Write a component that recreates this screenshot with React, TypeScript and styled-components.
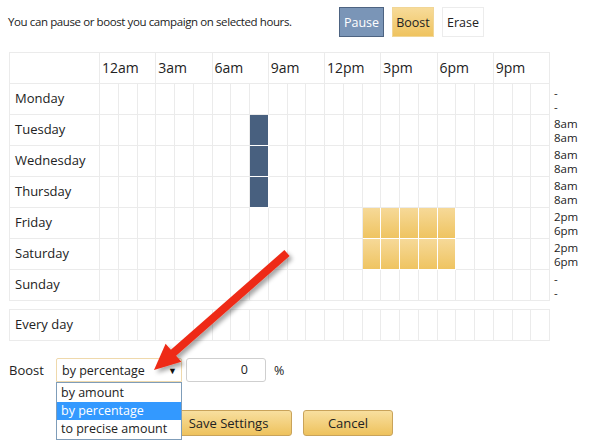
import React from "react";
import styled, { createGlobalStyle, css } from "styled-components";

const Global = createGlobalStyle`
  html, body { margin: 0; padding: 0; background: #fff; }
  body { font-family: "Open Sans", "Noto Sans", sans-serif; color: #222; }
  * { box-sizing: border-box; }
`;

const Page = styled.div`
  position: relative;
  width: 593px;
  height: 448px;
  padding: 7px 0 0 9px;
  overflow: hidden;
`;

const TopBar = styled.div`
  display: flex;
  align-items: flex-start;
  height: 45px;
`;

const Intro = styled.div`
  font-size: 11.5px;
  letter-spacing: -0.4px;
  line-height: 16px;
  margin: 7px 0 0 -1px;
  width: 331px;
`;

const ModeButtons = styled.div`
  display: flex;
  gap: 8px;
`;

const ModeButton = styled.div<{ $variant: "pause" | "boost" | "erase"; $w: number }>`
  width: ${(p) => p.$w}px;
  height: 30px;
  display: flex;
  align-items: center;
  justify-content: center;
  font-size: 12.5px;
  border: 1px solid;
  ${(p) =>
    p.$variant === "pause"
      ? css`
          background: #7a95b7;
          border-color: #4d6381;
          color: #fff;
        `
      : p.$variant === "boost"
      ? css`
          background: linear-gradient(#f7db99, #efc35f);
          border-color: #f1d696;
          color: #222;
        `
      : css`
          background: #fff;
          border-color: #ececec;
          color: #222;
        `}
`;

const cols = "91px repeat(24, 18.75px) 44px";

const Schedule = styled.div`
  display: grid;
  grid-template-columns: ${cols};
  grid-template-rows: 32px repeat(7, 31px);
`;

const EveryDay = styled.div`
  display: grid;
  grid-template-columns: ${cols};
  grid-template-rows: 32px;
  margin-top: 8px;
`;

const line = "#ebebeb";

const Blank = styled.div`
  border: 1px solid ${line};
`;

const HourHead = styled.div`
  grid-column: span 3;
  border-top: 1px solid ${line};
  border-right: 1px solid ${line};
  border-bottom: 1px solid ${line};
  font-size: 14px;
  color: #222;
  padding: 6px 0 0 2px;
  line-height: 18px;
`;

const DayLabel = styled.div<{ $top?: boolean }>`
  border-left: 1px solid ${line};
  border-right: 1px solid ${line};
  border-bottom: 1px solid ${line};
  ${(p) => p.$top && css`border-top: 1px solid ${line};`}
  font-size: 13px;
  color: #222;
  display: flex;
  align-items: center;
  padding: 0 0 2px 5px;
`;

const HourCell = styled.div<{ $fill?: "pause" | "boost"; $top?: boolean }>`
  border-right: 1px solid ${line};
  border-bottom: 1px solid ${line};
  ${(p) => p.$top && css`border-top: 1px solid ${line};`}
  ${(p) =>
    p.$fill === "pause" &&
    css`
      background: #48607f;
      border-color: #fff;
    `}
  ${(p) =>
    p.$fill === "boost" &&
    css`
      background: linear-gradient(#f6d998, #efc461);
      border-color: #fff;
    `}
`;

const Note = styled.div`
  font-size: 11.5px;
  line-height: 14px;
  padding-left: 4px;
  display: flex;
  flex-direction: column;
  justify-content: center;
  color: #222;
`;

const BoostRow = styled.div`
  display: flex;
  align-items: center;
  margin-top: 17px;
  height: 24px;
`;

const FieldLabel = styled.div`
  width: 47px;
  font-size: 13px;
`;

const SelectBox = styled.div`
  position: relative;
  width: 126px;
  height: 24px;
  border: 1px solid #efd9ac;
  border-radius: 2px 2px 0 0;
  font-size: 12.5px;
  display: flex;
  align-items: center;
  padding-left: 5px;
`;

const Caret = styled.span`
  position: absolute;
  right: 4px;
  top: 5px;
  font-size: 9px;
  color: #111;
`;

const Dropdown = styled.div`
  position: absolute;
  left: -1px;
  top: 23px;
  width: 126px;
  border: 1px solid #7f9db9;
  background: #fff;
  padding: 1px 0;
  z-index: 2;
`;

const Option = styled.div<{ $active?: boolean }>`
  height: 18px;
  line-height: 18px;
  padding-left: 4px;
  font-size: 12.5px;
  ${(p) =>
    p.$active &&
    css`
      background: #3399ff;
      color: #fff;
    `}
`;

const NumberInput = styled.div`
  width: 80px;
  height: 24px;
  margin-left: 4px;
  border: 1px solid #cfcfcf;
  border-radius: 3px;
  font-size: 12.5px;
  text-align: right;
  padding-right: 17px;
  line-height: 22px;
`;

const Unit = styled.div`
  margin-left: 8px;
  font-size: 12.5px;
`;

const Actions = styled.div`
  display: flex;
  gap: 11px;
  margin: 28px 0 0 156px;
`;

const ActionButton = styled.div<{ $w: number }>`
  width: ${(p) => p.$w}px;
  height: 26px;
  border: 1px solid #c9a35a;
  border-radius: 3px;
  background: linear-gradient(#f8df9f, #eec25d);
  font-size: 13px;
  display: flex;
  align-items: center;
  justify-content: center;
  color: #222;
`;

const ArrowSvg = styled.svg`
  position: absolute;
  left: 0;
  top: 0;
  pointer-events: none;
  z-index: 3;
`;

const hours = ["12am", "3am", "6am", "9am", "12pm", "3pm", "6pm", "9pm"];

type Day = { name: string; notes: [string, string]; fill?: { kind: "pause" | "boost"; from: number; to: number } };

const days: Day[] = [
  { name: "Monday", notes: ["-", "-"] },
  { name: "Tuesday", notes: ["8am", "8am"], fill: { kind: "pause", from: 8, to: 8 } },
  { name: "Wednesday", notes: ["8am", "8am"], fill: { kind: "pause", from: 8, to: 8 } },
  { name: "Thursday", notes: ["8am", "8am"], fill: { kind: "pause", from: 8, to: 8 } },
  { name: "Friday", notes: ["2pm", "6pm"], fill: { kind: "boost", from: 14, to: 18 } },
  { name: "Saturday", notes: ["2pm", "6pm"], fill: { kind: "boost", from: 14, to: 18 } },
  { name: "Sunday", notes: ["-", "-"] },
];

const range = Array.from({ length: 24 }, (_, i) => i);

export default function App() {
  return (
    <>
      <Global />
      <Page>
        <TopBar>
          <Intro>You can pause or boost you campaign on selected hours.</Intro>
          <ModeButtons>
            <ModeButton $variant="pause" $w={45}>Pause</ModeButton>
            <ModeButton $variant="boost" $w={42}>Boost</ModeButton>
            <ModeButton $variant="erase" $w={42}>Erase</ModeButton>
          </ModeButtons>
        </TopBar>

        <Schedule>
          <Blank />
          {hours.map((h) => (
            <HourHead key={h}>{h}</HourHead>
          ))}
          <div />
          {days.map((d) => (
            <React.Fragment key={d.name}>
              <DayLabel>{d.name}</DayLabel>
              {range.map((h) => (
                <HourCell
                  key={h}
                  $fill={d.fill && h >= d.fill.from && h <= d.fill.to ? d.fill.kind : undefined}
                />
              ))}
              <Note>
                <span>{d.notes[0]}</span>
                <span>{d.notes[1]}</span>
              </Note>
            </React.Fragment>
          ))}
        </Schedule>

        <EveryDay>
          <DayLabel $top>Every day</DayLabel>
          {range.map((h) => (
            <HourCell key={h} $top />
          ))}
          <div />
        </EveryDay>

        <BoostRow>
          <FieldLabel>Boost</FieldLabel>
          <SelectBox>
            by percentage
            <Caret>▼</Caret>
            <Dropdown>
              <Option>by amount</Option>
              <Option $active>by percentage</Option>
              <Option>to precise amount</Option>
            </Dropdown>
          </SelectBox>
          <NumberInput>0</NumberInput>
          <Unit>%</Unit>
        </BoostRow>

        <Actions>
          <ActionButton $w={127}>Save Settings</ActionButton>
          <ActionButton $w={90}>Cancel</ActionButton>
        </Actions>

        <ArrowSvg width="593" height="448" viewBox="0 0 593 448">
          <defs>
            <filter id="arrowShadow" x="-20%" y="-20%" width="140%" height="140%">
              <feDropShadow dx="3" dy="3" stdDeviation="2" floodColor="#000" floodOpacity="0.35" />
            </filter>
          </defs>
          <polygon
            points="284.4,250 289.6,256 176.1,355.8 181.4,361.8 154,370 165.6,343.8 170.9,349.8"
            fill="#ee2b16"
            filter="url(#arrowShadow)"
          />
        </ArrowSvg>
      </Page>
    </>
  );
}
